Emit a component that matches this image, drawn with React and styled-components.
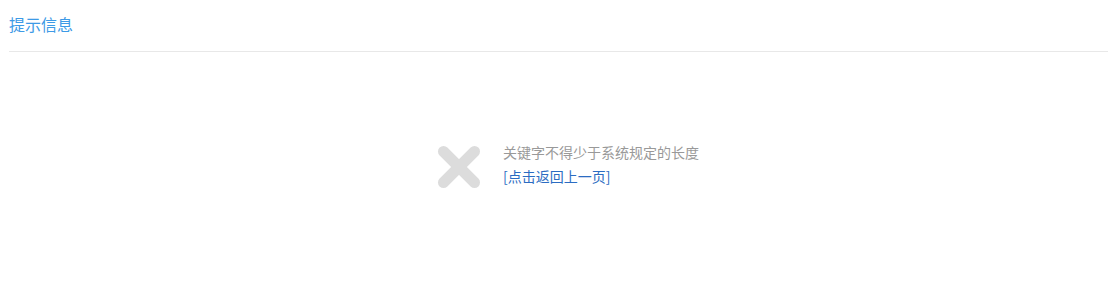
import React from 'react'
import styled, { createGlobalStyle } from 'styled-components'

const GlobalStyle = createGlobalStyle`
    html, body {
        margin: 0;
        padding: 0;
        background: #ffffff;
        font-family: "Noto Sans CJK SC", "Noto Sans", sans-serif;
    }
`

export const Page = styled.div`
    padding: 0 4px 0 9px;
    box-sizing: border-box;
    width: 100%;
`

export const Header = styled.div`
    padding: 12px 0 15px;
    border-bottom: 1px solid #e8e8e8;
`

export const Title = styled.h2`
    margin: 0;
    font-size: 16px;
    line-height: 24px;
    font-weight: normal;
    color: #3d9ae6;
`

export const Body = styled.div`
    display: flex;
    justify-content: center;
    padding-top: 88px;
    padding-right: 5px;
`

export const MessageBox = styled.div`
    display: flex;
    align-items: flex-start;
    gap: 22px;
    width: 238px;
`

export const IconWrap = styled.div`
    flex: none;
    width: 44px;
    height: 44px;
    margin-top: 5px;
`

export const TextBlock = styled.div`
    white-space: nowrap;
    font-size: 14px;
    line-height: 24px;
`

export const Message = styled.p`
    margin: 0;
    color: #999999;
`

export const BackLink = styled.a`
    display: block;
    color: #2b6cc2;
    text-decoration: none;
    cursor: pointer;

    &:hover {
        text-decoration: underline;
    }
`

const CrossIcon = () => (
    <svg width="44" height="44" viewBox="0 0 44 44">
        <g stroke="#dcdcdc" strokeWidth="11" strokeLinecap="round">
            <line x1="6.5" y1="6.5" x2="37.5" y2="37.5" />
            <line x1="37.5" y1="6.5" x2="6.5" y2="37.5" />
        </g>
    </svg>
)

export default function App() {
    return (
        <>
            <GlobalStyle />
            <Page>
                <Header>
                    <Title>提示信息</Title>
                </Header>
                <Body>
                    <MessageBox>
                        <IconWrap>
                            <CrossIcon />
                        </IconWrap>
                        <TextBlock>
                            <Message>关键字不得少于系统规定的长度</Message>
                            <BackLink>[点击返回上一页]</BackLink>
                        </TextBlock>
                    </MessageBox>
                </Body>
            </Page>
        </>
    )
}
